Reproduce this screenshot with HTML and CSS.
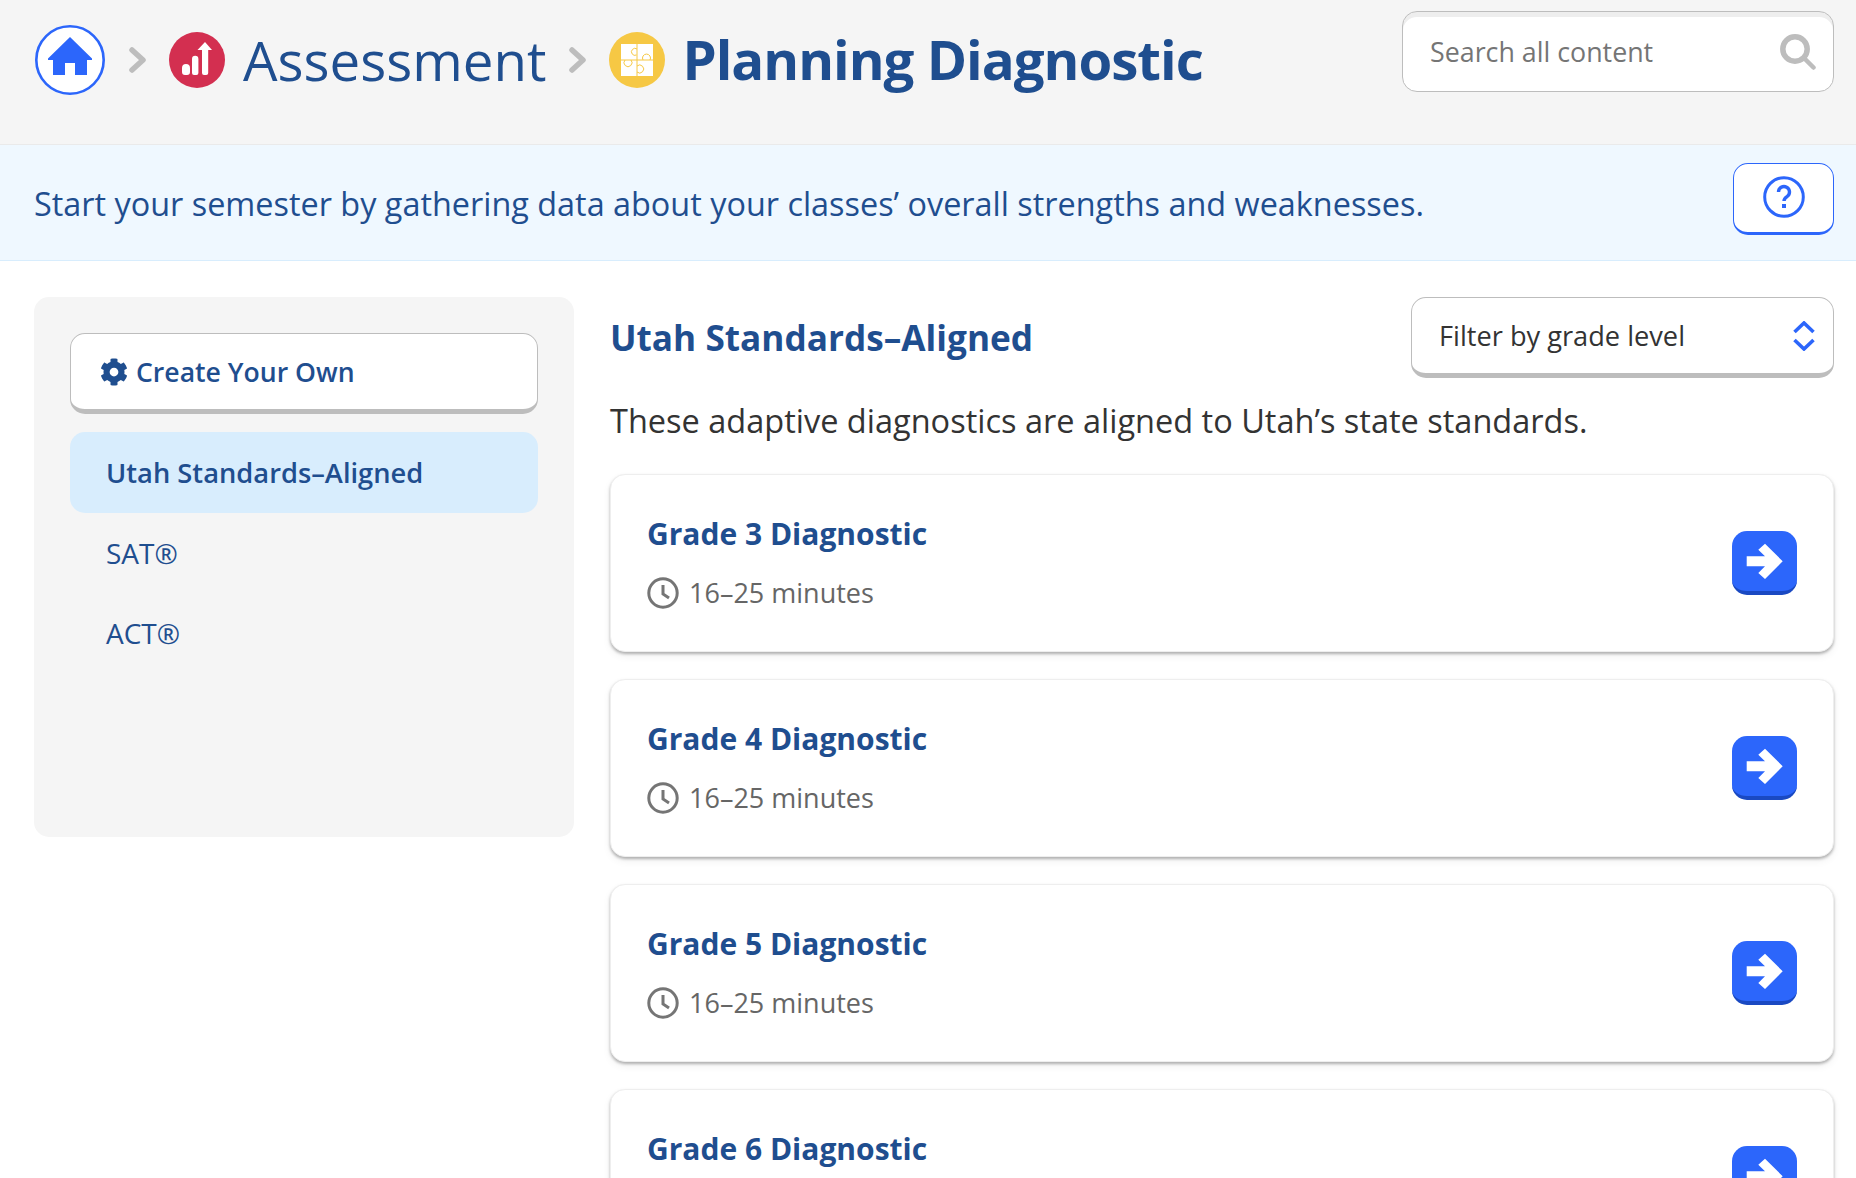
FILE: index.html
```html
<!DOCTYPE html>
<html lang="en">
<head>
<meta charset="utf-8">
<title>Planning Diagnostic</title>
<link rel="stylesheet" href="styles.css">
</head>
<body>
<svg class="defs" width="0" height="0" aria-hidden="true">
  <symbol id="clock" viewBox="0 0 32 32"><circle cx="16" cy="16" r="14.2" fill="none" stroke="#757575" stroke-width="3"/><path d="M16 8v9l6 4" fill="none" stroke="#757575" stroke-width="3"/></symbol>
  <symbol id="arrow" viewBox="0 0 65 60"><path d="M14.7 25.3H33L26.3 18.7 33 12.7 50.7 30.3 33 48l-6.7-6 6.7-6.7H14.7z" fill="#fff"/></symbol>
</svg>
<header class="topbar">
  <nav class="crumbs">
    <span class="home">
      <svg width="70" height="70" viewBox="0 0 70 70"><circle cx="35" cy="35" r="33.7" fill="#fff" stroke="#2c66fb" stroke-width="2.6"/><path d="M35 12 57 33.500V35H52V50H40V38H30V50H18V35H13V33.500Z" fill="#2c66fb"/></svg>
    </span>
    <svg class="chev" width="17" height="26" viewBox="0 0 17 26"><path d="M3 3l11 10L3 23" fill="none" stroke="#bdbdbd" stroke-width="5.500" stroke-linecap="round" stroke-linejoin="round"/></svg>
    <svg class="badge" width="56" height="56" viewBox="0 0 56 56"><circle cx="28" cy="28" r="28" fill="#d32f50"/><path d="M13 36a4 4 0 0 1 8 0v4a3 3 0 0 1-3 3h-2a3 3 0 0 1-3-3zM23 27a3.200 3.200 0 0 1 6.400 0v14a2 2 0 0 1-2 2h-2.400a2 2 0 0 1-2-2zM33 18h-4.500L36 10l7 8h-3.800v23a2 2 0 0 1-2 2H35a2 2 0 0 1-2-2z" fill="#fff"/></svg>
    <span class="crumb">Assessment</span>
    <svg class="chev" width="17" height="26" viewBox="0 0 17 26"><path d="M3 3l11 10L3 23" fill="none" stroke="#bdbdbd" stroke-width="5.500" stroke-linecap="round" stroke-linejoin="round"/></svg>
    <svg class="badge" width="56" height="56" viewBox="0 0 56 56"><circle cx="28" cy="28" r="28" fill="#f6c844"/><path d="M12 12h32v32H12z" fill="#fff"/><path d="M28 12v32M12 28h32" stroke="#f6c844" stroke-width="1"/><path d="M28 17a3.500 3.500 0 1 0-.5 6M34 28a4 4 0 1 1 7 0M22 28a4 4 0 1 1-6 0M28 34a4 4 0 1 1 0 6" fill="none" stroke="#f6c844" stroke-width="1"/></svg>
    <h1 class="crumb current">Planning Diagnostic</h1>
  </nav>
  <div class="search">
    <span class="search-text">Search all content</span>
    <svg width="36" height="36" viewBox="0 0 36 36"><circle cx="15" cy="15" r="12.200" fill="none" stroke="#bdbdbd" stroke-width="5.500"/><path d="M24.500 24.500 33.500 33.500" stroke="#bdbdbd" stroke-width="4.500" stroke-linecap="round"/></svg>
  </div>
</header>
<section class="banner">
  <p class="banner-text">Start your semester by gathering data about your classes’ overall strengths and weaknesses.</p>
  <button class="help" type="button">
    <svg width="42" height="42" viewBox="0 0 42 42"><circle cx="21" cy="21" r="19.300" fill="none" stroke="#2c66fb" stroke-width="3"/><path d="M15.500 16a5.500 5.500 0 1 1 8.500 4.600c-2 1.400-3 2.200-3 4.400" fill="none" stroke="#2c66fb" stroke-width="3.400"/><rect x="19" y="28" width="4" height="4" fill="#2c66fb"/></svg>
  </button>
</section>
<div class="layout">
  <aside class="side">
    <button class="create" type="button">
      <svg width="28" height="28" viewBox="0 0 512 512"><path fill="#1f4e8f" d="M487.400 315.700l-42.600-24.600c4.300-23.200 4.300-47 0-70.200l42.600-24.600c4.900-2.800 7.100-8.600 5.500-14-11.100-35.600-30-67.800-54.700-94.600-3.800-4.100-10-5.100-14.800-2.300L380.800 110c-17.900-15.400-38.500-27.300-60.800-35.100V25.800c0-5.600-3.900-10.500-9.400-11.700-36.700-8.200-74.300-7.800-109.200 0-5.500 1.200-9.400 6.100-9.400 11.700V75c-22.200 7.900-42.800 19.800-60.800 35.100L88.700 85.500c-4.900-2.800-11-1.900-14.800 2.300-24.700 26.700-43.600 58.900-54.700 94.600-1.700 5.400.6 11.200 5.500 14L67.300 221c-4.300 23.200-4.300 47 0 70.200l-42.600 24.600c-4.900 2.800-7.100 8.600-5.500 14 11.100 35.600 30 67.800 54.700 94.600 3.800 4.100 10 5.100 14.800 2.300l42.600-24.600c17.900 15.400 38.500 27.300 60.800 35.100v49.200c0 5.600 3.900 10.500 9.400 11.700 36.700 8.200 74.300 7.800 109.200 0 5.500-1.200 9.400-6.100 9.400-11.700v-49.200c22.200-7.900 42.800-19.800 60.800-35.100l42.600 24.600c4.900 2.800 11 1.900 14.800-2.300 24.700-26.700 43.600-58.900 54.700-94.600 1.500-5.500-.7-11.300-5.600-14.100zM256 336c-44.100 0-80-35.900-80-80s35.900-80 80-80 80 35.900 80 80-35.900 80-80 80z"/></svg>
      <span>Create Your Own</span>
    </button>
    <ul class="menu">
      <li class="menu-item active">Utah Standards–Aligned</li>
      <li class="menu-item">SAT®</li>
      <li class="menu-item">ACT®</li>
    </ul>
  </aside>
  <main class="main">
    <div class="main-head">
      <h2 class="main-title">Utah Standards–Aligned</h2>
      <div class="filter">
        <span>Filter by grade level</span>
        <svg width="22" height="30" viewBox="0 0 22 30"><path d="M1.500 11 11 2l9.500 9M1.500 19 11 28l9.500-9" fill="none" stroke="#2c66fb" stroke-width="3.600"/></svg>
      </div>
    </div>
    <p class="intro">These adaptive diagnostics are aligned to Utah’s state standards.</p>
    <article class="card">
      <div class="card-body">
        <h3 class="card-title">Grade 3 Diagnostic</h3>
        <div class="card-meta"><svg width="32" height="32"><use href="#clock"/></svg><span>16–25 minutes</span></div>
      </div>
      <span class="go"><svg width="65" height="60"><use href="#arrow"/></svg></span>
    </article>
    <article class="card">
      <div class="card-body">
        <h3 class="card-title">Grade 4 Diagnostic</h3>
        <div class="card-meta"><svg width="32" height="32"><use href="#clock"/></svg><span>16–25 minutes</span></div>
      </div>
      <span class="go"><svg width="65" height="60"><use href="#arrow"/></svg></span>
    </article>
    <article class="card">
      <div class="card-body">
        <h3 class="card-title">Grade 5 Diagnostic</h3>
        <div class="card-meta"><svg width="32" height="32"><use href="#clock"/></svg><span>16–25 minutes</span></div>
      </div>
      <span class="go"><svg width="65" height="60"><use href="#arrow"/></svg></span>
    </article>
    <article class="card">
      <div class="card-body">
        <h3 class="card-title">Grade 6 Diagnostic</h3>
        <div class="card-meta"><svg width="32" height="32"><use href="#clock"/></svg></div>
      </div>
      <span class="go"><svg width="65" height="60"><use href="#arrow"/></svg></span>
    </article>
  </main>
</div>
</body>
</html>
```
FILE: styles.css
```css
* { box-sizing: border-box; }
html, body { margin: 0; height: 1178px; overflow: hidden; background: #fff; }
body { font-family: "Open Sans", "Noto Sans", sans-serif; color: #333; }
h1, h2, h3, p, ul { margin: 0; padding: 0; }
ul { list-style: none; }
button { font: inherit; padding: 0; cursor: pointer; }
.defs { position: absolute; }

.topbar { height: 145px; background: #f5f5f5; border-bottom: 1px solid #eaeaea; padding: 11px 22px 0 35px; display: flex; justify-content: space-between; align-items: flex-start; }
.crumbs { display: flex; align-items: center; height: 92px; margin-top: 3px; }
.home { width: 70px; height: 70px; display: block; }
.home svg { display: block; }
.chev { margin: 0 23px 0 23px; flex: none; }
.home + .chev { margin-left: 24px; }
.badge { flex: none; }
.crumb { font-size: 54.6px; font-weight: 400; color: #1f4e8f; margin-left: 18px; line-height: 60px; }
.crumb.current { font-weight: 700; letter-spacing: -1px; margin-left: 17px; margin-top: -2px; }
.search { width: 432px; height: 81px; background: #fff; border: 1px solid #bdbdbd; border-radius: 15px; box-shadow: inset 0 5px 0 #eee; padding: 0 17px 0 27px; display: flex; align-items: center; justify-content: space-between; }
.search-text { font-size: 26.8px; color: #757575; }

.banner { height: 116px; background: #eff8ff; border-bottom: 1px solid #d8edfd; padding: 18px 22px 0 34px; display: flex; justify-content: space-between; align-items: flex-start; }
.banner-text { font-size: 32.4px; color: #1f4e8f; line-height: 44px; margin-top: 18px; }
.help { width: 101px; height: 72px; background: #fff; border: 1px solid #2c66fb; border-bottom-width: 3px; border-radius: 15px; display: flex; align-items: center; justify-content: center; }
.help svg { display: block; margin-top: -2px; }

.layout { display: flex; align-items: flex-start; gap: 36px; padding: 36px 22px 0 34px; }
.side { width: 540px; height: 540px; flex: none; background: #f5f5f5; border-radius: 15px; padding: 36px; }
.create { width: 100%; height: 81px; background: #fff; border: 1px solid #bdbdbd; border-bottom-width: 5px; border-radius: 15px; display: flex; align-items: center; gap: 8px; padding-left: 29px; font-size: 26.6px; font-weight: 600; color: #1f4e8f; }
.menu { margin-top: 18px; }
.menu-item { height: 80.5px; line-height: 80.5px; padding-left: 36px; font-size: 28px; color: #1f4e8f; border-radius: 15px; }
.menu-item.active { background: #d8edfd; font-size: 27.3px; font-weight: 600; line-height: 82px; }

.main { flex: 1; min-width: 0; }
.main-head { height: 81px; display: flex; justify-content: space-between; align-items: flex-start; }
.main-title { font-size: 35.2px; font-weight: 700; color: #1f4e8f; line-height: 48px; margin-top: 16px; }
.filter { width: 423px; height: 81px; background: #fff; border: 1px solid #bdbdbd; border-bottom-width: 5px; border-radius: 15px; padding: 0 18px 0 27px; display: flex; align-items: center; justify-content: space-between; font-size: 27.2px; font-weight: 500; color: #333; }
.intro { font-size: 32.5px; line-height: 44px; margin-top: 21px; margin-bottom: 30.5px; }
.card { height: 178px; margin-bottom: 27px; background: #fff; border: 1px solid #eee; border-radius: 15px; box-shadow: 0 2px 3px rgba(0,0,0,.28), 0 4px 8px rgba(0,0,0,.06); padding: 0 36px; display: flex; align-items: center; justify-content: space-between; }
.card-title { font-size: 30px; font-weight: 700; color: #1f4e8f; line-height: 40px; }
.card-meta { display: flex; align-items: center; gap: 10px; margin-top: 21px; min-height: 36px; font-size: 27px; color: #666; line-height: 36px; }
.card-meta svg { display: block; flex: none; }
.go { width: 65px; height: 64px; background: #2c66fb; border-bottom: 4px solid #1a49c2; border-radius: 15px; display: block; }
.go svg { display: block; }
```
